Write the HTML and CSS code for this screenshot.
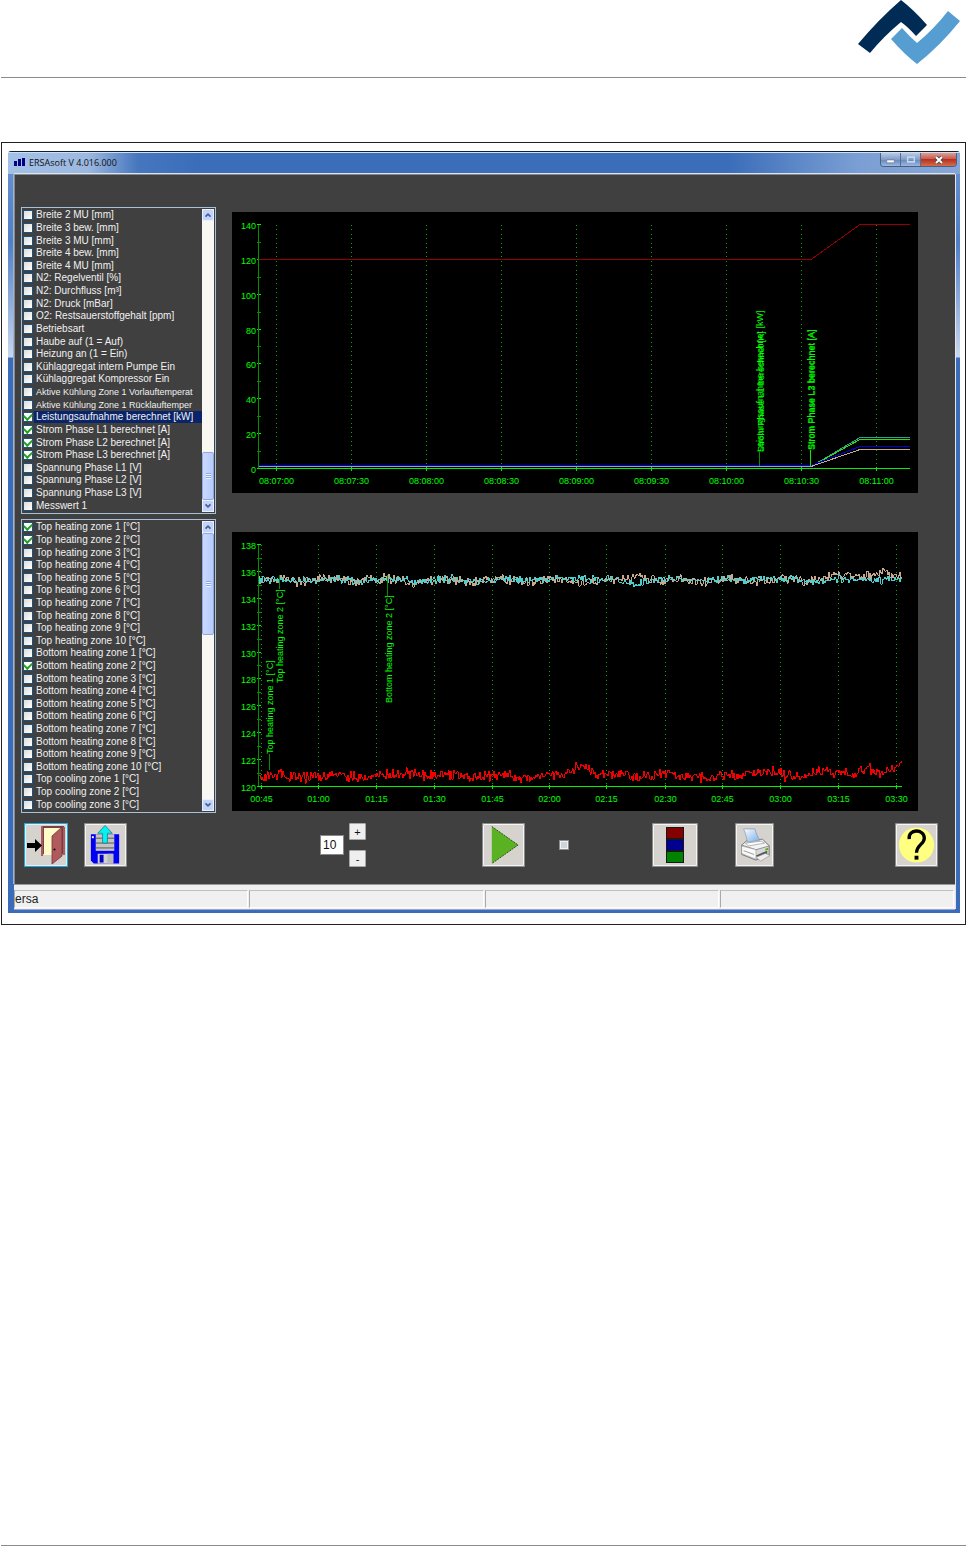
FILE: index.html
```html
<!DOCTYPE html>
<html lang="en">
<head>
<meta charset="utf-8">
<title>ERSAsoft V 4.016.000</title>
<link rel="stylesheet" href="styles.css">
</head>
<body>
<header class="page-head">
  <svg class="brand" viewBox="0 0 104 66" role="img" aria-label="Kurtz Ersa">
    <path fill="#002b54" d="M1 44Q22 19 44 0Q57 10 70 25L59 36Q51 27 44 22Q27 36 13 53Z"/>
    <path fill="#569dd2" d="M34 39L45 28Q53 37 60 43Q77 29 91 11L103 21Q83 46 60 64Q47 54 34 39Z"/>
  </svg>
</header>
<main class="figure">
  <section class="window">
    <div class="titlebar">
      <svg class="app-icon" viewBox="0 0 11 8" aria-hidden="true"><path fill="#000080" d="M0 3h3v5H0zM4 1h3v7H4zM8 0h3v8H8z"/></svg>
      <h1 class="title">ERSAsoft V 4.016.000</h1>
      <div class="caption-buttons">
        <button class="cap" aria-label="Minimize"><svg viewBox="0 0 20 13"><path d="M6 7h8v3H6z" fill="#fff" stroke="#59657c" stroke-width=".6"/></svg></button>
        <button class="cap" aria-label="Maximize"><svg viewBox="0 0 20 13"><path d="M7 4h7v5H7z" fill="none" stroke="#c4d5ec" stroke-width="1.6"/></svg></button>
        <button class="cap cap-close" aria-label="Close"><svg viewBox="0 0 35 13"><path d="M15 4l6 6M21 4l-6 6" stroke="#47464e" stroke-width="3.6"/><path d="M15 4l6 6M21 4l-6 6" stroke="#fff" stroke-width="2"/></svg></button>
      </div>
    </div>
    <div class="client">
      <div class="workspace">
        <div class="lists">
          <div class="list">
            <div class="rows" id="process-list"></div>
            <div class="scrollbar">
              <button class="arrow" aria-label="Scroll up"><svg viewBox="0 0 12 12"><path d="M3 8l3-3 3 3" fill="none" stroke="#44608c" stroke-width="2"/></svg></button>
              <div class="track track-low"><div class="thumb"></div></div>
              <button class="arrow" aria-label="Scroll down"><svg viewBox="0 0 12 12"><path d="M3 4l3 3 3-3" fill="none" stroke="#44608c" stroke-width="2"/></svg></button>
            </div>
          </div>
          <div class="list">
            <div class="rows" id="zone-list"></div>
            <div class="scrollbar">
              <button class="arrow" aria-label="Scroll up"><svg viewBox="0 0 12 12"><path d="M3 8l3-3 3 3" fill="none" stroke="#44608c" stroke-width="2"/></svg></button>
              <div class="track"><div class="thumb thumb-long"></div></div>
              <button class="arrow" aria-label="Scroll down"><svg viewBox="0 0 12 12"><path d="M3 4l3 3 3-3" fill="none" stroke="#44608c" stroke-width="2"/></svg></button>
            </div>
          </div>
        </div>
        <div class="charts">
          <svg class="chart" id="power-chart" viewBox="0 0 686 281"></svg>
          <svg class="chart" id="zone-chart" viewBox="0 0 686 279"></svg>
        </div>
      </div>
      <div class="toolbar">
        <button class="tool tool-exit" aria-label="Exit"><svg viewBox="2 2 40 40">
          <path d="M18 3h22v28H18z" fill="#7d4044"/><path d="M20 5h18v27H20z" fill="#fffbc8"/>
          <path d="M18 3v30M40 4v28" stroke="#a85c60" stroke-width="2"/><path d="M28 13L38 4v29L28 41z" fill="#b05a5e" stroke="#6e3437" stroke-width=".8"/>
          <circle cx="30.500" cy="26.500" r="1"/><path d="M3 20h8v-4l7 6.500-7 6.500v-4H3z"/></svg></button>
        <button class="tool tool-save" aria-label="Save"><svg viewBox="2 2 40 40">
          <path d="M7 11h29v30H10l-3-3z" fill="#0000f5"/><path d="M12 11h19v17H12z" fill="#c4c4c4"/>
          <path d="M12 15h19M12 20h19M12 25h19" stroke="#555" stroke-width="1"/><path d="M14 31h16v10H14z" fill="#d4d0cc"/><path d="M16 32h4v8h-4z" fill="#0000c8"/><path d="M24 31h6v10h-6z" fill="#bbb"/><path d="M8 13h2v2H8z" fill="#fff"/>
          <path d="M21.500 2L29 10h-5v10h-5V10h-5z" fill="#00f4f4" stroke="#247a80" stroke-width=".8"/></svg></button>
        <input class="value" type="text" value="10" aria-label="Interval">
        <div class="stepper"><button class="step" aria-label="Increase">+</button><button class="step" aria-label="Decrease">-</button></div>
        <button class="tool tool-play" aria-label="Start"><svg viewBox="2 2 40 40"><path d="M10 3l27 19L10 41z" fill="#5ab222"/><path d="M10 3l27 19L10 41" fill="none" stroke="#2c4e18" stroke-width="1" stroke-dasharray="2 1"/></svg></button>
        <input class="auto" type="checkbox" aria-label="Automatic">
        <button class="tool tool-colors" aria-label="Line colours"><svg viewBox="2 2 40 40"><path d="M13 4h18v36H13z" fill="#181818"/><path d="M14 5h16v10H14z" fill="#850000"/><path d="M14 17h16v10H14z" fill="#000090"/><path d="M14 29h16v10H14z" fill="#008200"/></svg></button>
        <button class="tool tool-print" aria-label="Print"><svg viewBox="2 2 37 40">
          <defs><linearGradient id="paper" x1="0" y1="0" x2="1" y2="1"><stop offset="0" stop-color="#fff"/><stop offset="1" stop-color="#72adec"/></linearGradient></defs>
          <path d="M7 22l6-5 16-1 7 7v9l-14 6-15-6z" fill="#d8d8d8" stroke="#777"/><path d="M7 22l15 5 14-4-7-7-16 1z" fill="#f3f3f3" stroke="#777" stroke-width=".8"/>
          <path d="M9 5l12 0c1 5 3 8 5 12l-13 2C12 14 11 9 9 5z" fill="url(#paper)" stroke="#7b8799" stroke-width=".6"/>
          <path d="M11 20l17-2 3 2-17 3z" fill="#fff" stroke="#666" stroke-width=".5"/><path d="M7 23v8l15 6V27z" fill="#fafafa" stroke="#888" stroke-width=".5"/><path d="M9 28l11 4" stroke="#999"/>
          <path d="M22 33l12-5v3l-10 5z" fill="#555"/><path d="M22 35l10-4 5 2-10 6z" fill="#eee" stroke="#888" stroke-width=".6"/><path d="M32 26l3-1v2l-3 1z" fill="#54ad20"/></svg></button>
        <button class="tool tool-help" aria-label="Help"><svg viewBox="2 2 40 40"><circle cx="22" cy="22" r="18" fill="#ffff80"/><path d="M14.500 16C13 5 30 5 30 15c0 6-8 7-8 15" fill="none" stroke="#000" stroke-width="3.400"/><path d="M20 33h4v4h-4z"/></svg></button>
      </div>
    </div>
    <div class="status"><span class="cell">ersa</span><span class="cell"></span><span class="cell"></span><span class="cell"></span></div>
  </section>
</main>
<footer class="page-foot"></footer>
<script src="app.js"></script>
</body>
</html>
```
FILE: styles.css
```css
* { box-sizing: border-box; }
body {
  margin: 0;
  min-height: 100vh;
  display: flex;
  flex-direction: column;
  background: #fff;
  font-family: "Liberation Sans", Arial, sans-serif;
}
button, input { font-family: inherit; margin: 0; padding: 0; }
svg { display: block; }

.page-head {
  height: 78px;
  margin: 0 0 64px 1px;
  padding-right: 5px;
  border-bottom: 1px solid #8c8c8c;
}
.brand { width: 104px; height: 66px; margin-left: auto; }
.page-foot { margin: auto 0 0 1px; border-bottom: 1px solid #8c8c8c; }

.figure {
  margin-left: 1px;
  padding: 8px 5px 11px 6px;
  border: 1px solid #231f20;
}
.window {
  padding: 0 5px 4px 6px;
  border-top: 1px solid #10202e;
  border-radius: 3px 3px 0 0;
  background: linear-gradient(#6b93d0 0, #4f7fc6 90px, #c9d7ee 205px, #3b6cba 206px);
}
.titlebar {
  display: flex;
  align-items: flex-start;
  height: 22px;
  margin: 0 -5px 0 -6px;
  padding: 0 3px 0 6px;
  border-top: 1px solid #cfe0f5;
  background: linear-gradient(90deg, #a3c0e6 0, #9cb8df 80px, #4676be 130px, #3b6db9 190px, #3b6db9 720px, #7b9fd4 850px, #86a6d6);
}
.app-icon { width: 11px; height: 8px; margin: 5px 4px 0 0; }
.title {
  flex: 1;
  margin: 0;
  font: 400 9px/19px "Open Sans", "Noto Sans", sans-serif;
  color: #111;
}
.caption-buttons { display: flex; border: 1px solid #4b5f85; border-top: 0; border-radius: 0 0 4px 4px; overflow: hidden; }
.cap { width: 20px; height: 13px; border: 0; border-right: 1px solid #5a6d91; background: linear-gradient(#b9cae3, #7f9cc8 50%, #6587bd 51%, #9ab8df); }
.cap svg { width: 100%; height: 13px; }
.cap-close { width: 35px; border-right: 0; background: linear-gradient(#dd9d92, #c75c4d 45%, #b33223 50%, #d66c48); }

.client {
  padding: 32px 0 17px;
  border-top: 1px solid #888;
  border-left: 1px solid #888;
  background: #404040;
  box-shadow: 0 -1px #dbe5f2, 1px 0 #e2e6ec, -1px 0 #9fb3d3;
}
.workspace {
  display: grid;
  grid-template-columns: 195px 1fr;
  gap: 16px;
  padding: 0 37px 0 6px;
}
.lists { display: flex; flex-direction: column; gap: 5px; }
.list {
  display: flex;
  height: 307px;
  padding: 1px;
  border: 1px solid #a9c1d8;
}
.list + .list { height: 294px; }
.rows { flex: 1; min-width: 0; display: grid; grid-auto-rows: 1fr; }
.row {
  display: grid;
  grid-template-columns: 11px 1fr;
  align-items: center;
  min-height: 0;
  font-size: 10px;
  line-height: 12px;
  color: #f0f0f0;
  white-space: nowrap;
}
.row span { padding-left: 2px; }
.row.long { font-size: 9px; }
.row.selected span { background: #0a246a; }
.row input, .auto {
  appearance: none;
  width: 10px;
  height: 10px;
  border: 1px solid #1c5180;
  background: linear-gradient(135deg, #dcdcd8, #fff);
}
.row input:checked {
  display: grid;
  place-items: center;
  background: #fff;
}
.row input:checked::after {
  content: "";
  width: 6px;
  height: 4px;
  margin-bottom: 2px;
  border: solid #21a121;
  border-width: 0 0 2px 2px;
  transform: rotate(-45deg);
}
.scrollbar { width: 12px; display: flex; flex-direction: column; background: #f8f7f2; }
.arrow { width: 12px; height: 12px; border: 1px solid #e8efff; border-radius: 2px; background: #c3d3fb; }
.arrow svg { width: 10px; height: 10px; }
.track { flex: 1; display: flex; flex-direction: column; }
.track-low { justify-content: flex-end; }
.thumb {
  height: 48px;
  border: 1px solid #8fa9dd;
  border-radius: 2px;
  background:
    repeating-linear-gradient(#8ba7e4 0 1px, #eef3ff 1px 2px) center / 5px 6px no-repeat,
    linear-gradient(90deg, #cbd9ff, #b6cafb);
}
.thumb-long { height: 102px; }

.charts { display: flex; flex-direction: column; gap: 39px; padding-top: 5px; }
.chart { width: 100%; background: #000; font-size: 9px; shape-rendering: crispEdges; }
.chart text { fill: #00ff00; }
.axis { stroke: #00f000; }
.dim { stroke: #009000; }
.grid { stroke: #00a800; stroke-dasharray: 1 3.5; }
.series { fill: none; }

.toolbar {
  display: grid;
  grid-template-columns: 44px 16px 43px 193fr 24px 5px 17px 116fr 43px 34fr 10px 83fr 46px 37fr 39px 121fr 43px;
  align-items: center;
  margin-top: 10px;
  padding: 0 17px 0 9px;
}
.tool { height: 44px; border: 2px solid #f4f4f4; border-radius: 2px; background: #d6d2ce; outline: 1px solid #8a8a8a; outline-offset: -1px; }
.tool svg { width: 100%; height: 40px; }
.tool-exit { grid-column: 1; border-color: #d9f4ff; outline-color: #20a8dc; }
.tool-save { grid-column: 3; }
.value { grid-column: 5; width: 24px; height: 20px; padding-left: 2px; border: 1px solid #888; background: #fff; font-size: 12px; color: #111; }
.stepper { grid-column: 7; display: grid; gap: 10px; }
.step { height: 17px; border: 1px solid #a8a8a8; border-radius: 1px; background: #efefef; font-size: 11px; line-height: 12px; color: #111; }
.tool-play { grid-column: 9; }
.auto { grid-column: 11; border: 2px solid #f2f2f2; outline: 1px solid #8d8d8d; outline-offset: -1px; background: #cfd3da; }
.tool-colors { grid-column: 13; }
.tool-print { grid-column: 15; }
.tool-help { grid-column: 17; }

.status {
  display: grid;
  grid-template-columns: repeat(4, 1fr);
  gap: 1px;
  padding: 5px 1px 1px 0;
  border-top: 1px solid #999;
  background: #f0f0f0;
  box-shadow: 0 1px #9aa9cc, 1px 0 #e2e6ec;
}
.cell {
  height: 18px;
  border: 1px solid;
  border-color: #c0c0c0 #fff #fff #aaa;
  font-size: 12px;
  line-height: 16px;
  color: #222;
}
```
FILE: app.js
```js
const processItems = [
  "Breite 2 MU [mm]", "Breite 3 bew. [mm]", "Breite 3 MU [mm]", "Breite 4 bew. [mm]", "Breite 4 MU [mm]",
  "N2: Regelventil [%]", "N2: Durchfluss [m³]", "N2: Druck [mBar]", "O2: Restsauerstoffgehalt [ppm]",
  "Betriebsart", "Haube auf (1 = Auf)", "Heizung an (1 = Ein)", "Kühlaggregat intern Pumpe Ein",
  "Kühlaggregat Kompressor Ein", "Aktive Kühlung Zone 1 Vorlauftemperat", "Aktive Kühlung Zone 1 Rücklauftemper",
  "*Leistungsaufnahme berechnet [kW]", "*Strom Phase L1 berechnet [A]", "*Strom Phase L2 berechnet [A]",
  "*Strom Phase L3 berechnet [A]", "Spannung Phase L1 [V]", "Spannung Phase L2 [V]", "Spannung Phase L3 [V]", "Messwert 1"
];
const zoneItems = [];
for (let i = 1; i <= 10; i++) zoneItems.push((i <= 2 ? "*" : "") + `Top heating zone ${i} [°C]`);
for (let i = 1; i <= 10; i++) zoneItems.push((i === 2 ? "*" : "") + `Bottom heating zone ${i} [°C]`);
for (let i = 1; i <= 3; i++) zoneItems.push(`Top cooling zone ${i} [°C]`);

// A leading "*" marks a measurement that is plotted.
function fillList(id, items, selected) {
  document.getElementById(id).innerHTML = items.map((item, i) => {
    const on = item[0] === "*";
    const cls = "row" + (i === selected ? " selected" : "") + (item.length > 34 ? " long" : "");
    return `<label class="${cls}"><input type="checkbox"${on ? " checked" : ""}><span>${on ? item.slice(1) : item}</span></label>`;
  }).join("");
}
fillList("process-list", processItems, 16);
fillList("zone-list", zoneItems, -1);

const line = (x1, y1, x2, y2, cls) => `<path class="${cls}" d="M${x1} ${y1}L${x2} ${y2}"/>`;
const text = (x, y, s, anchor) => `<text x="${x}" y="${y}" text-anchor="${anchor}">${s}</text>`;
const upright = (x, y, s) => `<text transform="translate(${x} ${y}) rotate(-90)">${s}</text>`;
const series = (points, color) => `<polyline class="series" stroke="${color}" points="${points}"/>`;

function frame(o) {
  let out = "";
  o.times.forEach(([x, label]) => {
    out += line(x, o.top, x, o.bottom, "grid") + line(x, o.bottom - 2, x, o.bottom + 2, "axis");
    out += text(x, o.bottom + 15, label, "middle");
  });
  const n = (o.max - o.min) / o.step;
  const pitch = (o.bottom - o.top) / n;
  for (let i = 0; i <= n; i++) {
    const y = Math.floor(o.bottom - i * pitch) + 0.5;
    out += line(25, y, 29, y, "axis") + text(24, y + 4, o.min + i * o.step, "end");
    const mid = Math.floor(y - pitch / 2) + 0.5;
    if (i < n) out += line(25, mid, 29, mid, "dim");
  }
  return out + line(26.5, o.top, 26.5, o.bottom, "dim") + line(26, o.bottom, o.right, o.bottom, "axis");
}

const powerTimes = ["08:07:00", "08:07:30", "08:08:00", "08:08:30", "08:09:00", "08:09:30", "08:10:00", "08:10:30", "08:11:00"]
  .map((label, i) => [44.5 + i * 75, label]);
document.getElementById("power-chart").innerHTML =
  frame({ times: powerTimes, top: 12.5, bottom: 256.5, min: 0, max: 140, step: 20, right: 678 }) +
  series("27,47.5 579,47.5 628,12.5 678,12.5", "#980000") +
  series("27,254.5 579,254.5 628,225.500 678,225.500", "#359b9b") +
  series("579,254.5 628,227.500 678,227.500", "#20e800") +
  series("579,254.5 628,237.500 678,237.500", "#c9a98c") +
  series("27,253.5 579,253.5 628,234.500 678,234.500", "#0000d8") +
  series("27,254.5 579,254.5", "#80a8c8") +
  line(527.5, 240, 527.5, 254, "dim") + line(578.5, 238, 578.5, 254, "axis") +
  upright(531, 240, "Leistungsaufnahme berechnet [kW]") + upright(532, 240, "Strom Phase L1 berechnet [A]") +
  upright(582, 238, "Strom Phase L2 berechnet [A]") + upright(583, 238, "Strom Phase L3 berechnet [A]");

let seed = 17;
function random() {
  seed = (seed * 16807) % 2147483647;
  return seed / 2147483647;
}
// Each bump is [centre, half width, height in chart units].
function trace(base, noise, bumps) {
  const points = [];
  for (let x = 27; x <= 670; x += 1) {
    let y = base + (random() + random() - 1) * noise + Math.sin(x / 9) * 1.2;
    bumps.forEach(([c, w, h]) => { y -= h * Math.exp(-(((x - c) / w) ** 2)); });
    points.push(`${x},${y.toFixed(1)}`);
  }
  return points.join(" ");
}
const zoneTimes = [29.5, 86.5, 144.5, 202.5, 260.5, 317.5, 374.5, 433.5, 490.5, 548.5, 606.5, 664.5]
  .map((x, i) => [x, ["00:45", "01:00", "01:15", "01:30", "01:45", "02:00", "02:15", "02:30", "02:45", "03:00", "03:15", "03:30"][i]]);
document.getElementById("zone-chart").innerHTML =
  frame({ times: zoneTimes, top: 12.5, bottom: 254.5, min: 120, max: 138, step: 2, right: 670 }) +
  series(trace(48.5, 6, [[408, 8, 7], [605, 20, 5], [650, 22, 8], [135, 5, 4]]), "#c9a98c") +
  series(trace(48, 5, [[350, 12, 3], [400, 14, -2], [527, 12, 3]]), "#50cccc") +
  series(trace(244, 7, [[350, 14, 10], [527, 14, 6], [592, 15, 5], [636, 11, 9], [670, 13, 11], [180, 12, 4]]), "#f00000") +
  line(47.5, 43, 47.5, 57, "dim") + line(155.5, 43, 155.5, 64, "dim") + line(37.5, 222, 37.5, 238, "dim") +
  upright(41, 222, "Top heating zone 1 [°C]") + upright(51, 151, "Top heating zone 2 [°C]") + upright(160, 171, "Bottom heating zone 2 [°C]");
```
